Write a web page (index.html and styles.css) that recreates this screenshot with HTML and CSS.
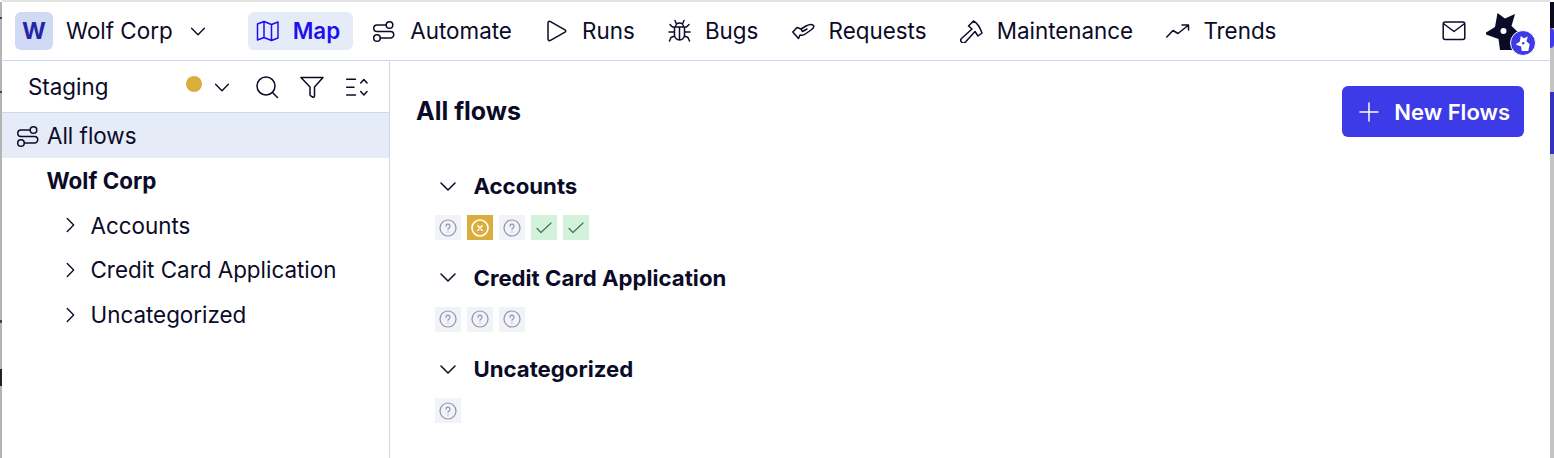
FILE: index.html
```html
<!DOCTYPE html>
<html lang="en">
<head>
    <meta charset="UTF-8" />
    <title>Wolf Corp | Map</title>
    <link rel="stylesheet" href="styles.css">
</head>
<body>
    <div class="edge-left"></div>

    <div class="app">
        <header class="topbar">
            <div class="org">
                <span class="org-badge">W</span>
                <span class="org-name">Wolf Corp</span>
                <svg class="icon chevron" viewBox="0 0 24 24"><path d="M5 9l7 7 7-7"/></svg>
            </div>

            <nav class="tabs">
                <a class="tab active" href="#">
                    <svg class="icon" viewBox="0 0 24 24"><path d="M1.500 5L8 2.500L15.500 5.500L22 3V19L15.500 21.500L8 18.500L1.500 21ZM8 2.500V18.500M15.500 5.500V21.500"/></svg>
                    Map
                </a>
                <a class="tab" href="#">
                    <svg class="icon" viewBox="0 0 24 24"><circle cx="16.500" cy="6" r="3.300"/><circle cx="4" cy="19" r="3.300"/><path d="M13.200 6H4a3.250 3.250 0 0 0 0 6.500H17.500a3.250 3.250 0 0 1 0 6.500H7.300"/></svg>
                    Automate
                </a>
                <a class="tab" href="#">
                    <svg class="icon" viewBox="0 0 24 24"><path d="M3 4C3 2.500 4.300 2 5.500 2.700L20 10.800C21 11.500 21 12.500 20 13.200L5.500 21.300C4.300 22 3 21.500 3 20Z"/></svg>
                    Runs
                </a>
                <a class="tab" href="#">
                    <svg class="icon" viewBox="0 0 24 24"><path d="M4.500 8H18.500M7.500 8a4 4 0 0 1 8 0M8.500 5L7 1.500M14.500 5L16 1.500M6.500 8V16a5 5 0 0 0 10 0V8M11.500 8V21M6.500 13H1M16.500 13H22M6.500 17L3 18.500L1.500 22M16.500 17L20 18.500L21.500 22M4.500 8L2 5.500M18.500 8L21 5.500"/></svg>
                    Bugs
                </a>
                <a class="tab" href="#">
                    <svg class="icon" viewBox="0 0 24 24"><path d="M0.800 13L5 8.500L9 10L14 7C17 5.500 20 5 21.500 6.500C22.500 8 21 9.500 19 11L14 14.500C12 16 10 16.500 8 16L6.500 19.500ZM9 10L10.500 12.500L15 10"/></svg>
                    Requests
                </a>
                <a class="tab" href="#">
                    <svg class="icon" viewBox="0 0 24 24"><path d="M8.500 7L13.500 2C17 4 20 8 22 14L18 17L15 12.500L5.500 23a2 2 0 0 1-4-3.500L12 10Z"/></svg>
                    Maintenance
                </a>
                <a class="tab" href="#">
                    <svg class="icon" viewBox="0 0 24 24"><path d="M0.800 18L7 11.500L12 14.500L22 6.500M16 6H22.500V11"/></svg>
                    Trends
                </a>
            </nav>

            <div class="user">
                <svg class="icon mail" viewBox="0 0 24 24"><rect x="1.200" y="3" width="21.600" height="17.500" rx="2"/><path d="M2 5l10 7.500L22 5"/></svg>
                <div class="avatar">
                    <svg class="wolf" viewBox="0 0 34 37"><path d="M11.500 0L19 5.500L29 1L25.500 13L33.500 20.500L30 37H14L12.500 26L0 21.500V19.500L9 14Z"/><circle cx="17.500" cy="18" r="3" fill="#fff"/></svg>
                    <span class="avatar-badge">
                        <svg viewBox="0 0 34 37"><path d="M11.500 0L19 5.500L29 1L25.500 13L33.500 20.500L30 37H14L12.500 26L0 21.500V19.500L9 14Z"/><circle cx="17.500" cy="18" r="3" fill="#3d3be8"/></svg>
                    </span>
                </div>
            </div>
        </header>

        <div class="body">
            <aside class="sidebar">
                <div class="sidebar-head">
                    <span class="env-name">Staging</span>
                    <span class="env-dot"></span>
                    <svg class="icon env-chevron" viewBox="0 0 24 24"><path d="M5 9l7 7 7-7"/></svg>
                    <svg class="icon tool" viewBox="0 0 24 24"><circle cx="11" cy="11" r="9"/><path d="M17.500 17.500L22.500 22.500"/></svg>
                    <svg class="icon tool" viewBox="0 0 24 24"><path d="M1 2.500h22l-8.500 9.500v9c0 1-1 1.500-1.800 1l-2-1.200c-.500-.300-.700-.800-.700-1.300V12Z"/></svg>
                    <svg class="icon tool" viewBox="0 0 24 24"><path d="M1.700 4.300H10.500M1.700 12.300H9M1.700 20H10.500M15.700 8l3.200-3.500L22 8M15.700 16.500l3.200 3.500 3.100-3.500"/></svg>
                </div>
                <ul class="tree">
                    <li class="tree-row selected">
                        <svg class="icon" viewBox="0 0 24 24"><circle cx="16.500" cy="6" r="3.300"/><circle cx="4" cy="19" r="3.300"/><path d="M13.200 6H4a3.250 3.250 0 0 0 0 6.500H17.500a3.250 3.250 0 0 1 0 6.500H7.300"/></svg>
                        All flows
                    </li>
                    <li class="tree-row tree-org">Wolf Corp</li>
                    <li class="tree-row tree-folder">
                        <svg class="icon caret" viewBox="0 0 24 24"><path d="M9 5l7 7-7 7"/></svg>
                        Accounts
                    </li>
                    <li class="tree-row tree-folder">
                        <svg class="icon caret" viewBox="0 0 24 24"><path d="M9 5l7 7-7 7"/></svg>
                        Credit Card Application
                    </li>
                    <li class="tree-row tree-folder">
                        <svg class="icon caret" viewBox="0 0 24 24"><path d="M9 5l7 7-7 7"/></svg>
                        Uncategorized
                    </li>
                </ul>
            </aside>

            <main class="content">
                <div class="content-head">
                    <h1>All flows</h1>
                    <button class="new-btn">
                        <svg class="icon" viewBox="0 0 24 24"><path d="M12 3v18M3 12h18"/></svg>
                        New Flows
                    </button>
                </div>

                <section class="group">
                    <h2>
                        <svg class="icon" viewBox="0 0 24 24"><path d="M5 9l7 7 7-7"/></svg>
                        Accounts
                    </h2>
                    <div class="chips">
                        <span class="chip unknown"><svg viewBox="0 0 18 18"><circle cx="9" cy="9" r="8"/><path d="M7 7.200a2 2 0 1 1 3 1.700c-.700.400-1 .800-1 1.400M9 12.800v.200"/></svg></span>
                        <span class="chip failed"><svg viewBox="0 0 18 18"><circle cx="9" cy="9" r="8"/><path d="M6.800 6.800l4.400 4.400M11.200 6.800l-4.400 4.400"/></svg></span>
                        <span class="chip unknown"><svg viewBox="0 0 18 18"><circle cx="9" cy="9" r="8"/><path d="M7 7.200a2 2 0 1 1 3 1.700c-.700.400-1 .800-1 1.400M9 12.800v.200"/></svg></span>
                        <span class="chip passed"><svg viewBox="0 0 18 18"><path d="M2 9.500l4 4L16 4"/></svg></span>
                        <span class="chip passed"><svg viewBox="0 0 18 18"><path d="M2 9.500l4 4L16 4"/></svg></span>
                    </div>
                </section>

                <section class="group">
                    <h2>
                        <svg class="icon" viewBox="0 0 24 24"><path d="M5 9l7 7 7-7"/></svg>
                        Credit Card Application
                    </h2>
                    <div class="chips">
                        <span class="chip unknown"><svg viewBox="0 0 18 18"><circle cx="9" cy="9" r="8"/><path d="M7 7.200a2 2 0 1 1 3 1.700c-.700.400-1 .800-1 1.400M9 12.800v.200"/></svg></span>
                        <span class="chip unknown"><svg viewBox="0 0 18 18"><circle cx="9" cy="9" r="8"/><path d="M7 7.200a2 2 0 1 1 3 1.700c-.700.400-1 .800-1 1.400M9 12.800v.200"/></svg></span>
                        <span class="chip unknown"><svg viewBox="0 0 18 18"><circle cx="9" cy="9" r="8"/><path d="M7 7.200a2 2 0 1 1 3 1.700c-.700.400-1 .800-1 1.400M9 12.800v.200"/></svg></span>
                    </div>
                </section>

                <section class="group">
                    <h2>
                        <svg class="icon" viewBox="0 0 24 24"><path d="M5 9l7 7 7-7"/></svg>
                        Uncategorized
                    </h2>
                    <div class="chips">
                        <span class="chip unknown"><svg viewBox="0 0 18 18"><circle cx="9" cy="9" r="8"/><path d="M7 7.200a2 2 0 1 1 3 1.700c-.700.400-1 .800-1 1.400M9 12.800v.200"/></svg></span>
                    </div>
                </section>
            </main>
        </div>
    </div>

    <div class="edge-right">
        <span class="edge-dark"></span>
        <span class="edge-dot"></span>
        <span class="edge-blue"></span>
    </div>
</body>
</html>
```

FILE: styles.css
```css
:root {
    --ink: #0b0b28;
    --line: #cdd8ef;
    --brand: #3d3be8;
    --pale: #e6ebf8;
}

* {
    margin: 0;
    padding: 0;
    box-sizing: border-box;
}

html, body {
    height: 100%;
    overflow: hidden;
}

body {
    display: flex;
    font-family: 'Inter', sans-serif;
    color: var(--ink);
    background: #fff;
}

/* Bits of the windows behind this one */
.edge-left {
    width: 2px;
    margin-top: 2px;
    background: linear-gradient(to bottom,
        #b4b4b4 15px, #444 15px 17px,
        #b4b4b4 17px 89px, #444 89px 91px,
        #b4b4b4 91px 318px, #444 318px 321px,
        #b4b4b4 321px 367px, #222 367px 384px,
        #b4b4b4 384px);
}

.edge-right {
    width: 4px;
    margin-top: 2px;
    display: flex;
    flex-direction: column;
    background: #c4c4c4;
}

.edge-dark {
    height: 26px;
    background: #0b0b20;
}

.edge-dot {
    height: 20px;
    border-radius: 0 10px 10px 0;
    background: var(--brand);
}

.edge-blue {
    height: 62px;
    margin-top: 44px;
    background: #3433c0;
}

.app {
    flex: 1;
    min-width: 0;
    display: flex;
    flex-direction: column;
    border-top: 2px solid #e2e2e2;
}

.icon {
    fill: none;
    stroke: currentColor;
    stroke-width: 1.5;
    stroke-linecap: round;
    stroke-linejoin: round;
    flex: none;
    width: 24px;
    height: 24px;
}

/* Top bar */
.topbar {
    height: 59px;
    display: flex;
    align-items: center;
    padding: 0 30px 0 13px;
    border-bottom: 1px solid var(--line);
}

.org {
    display: flex;
    align-items: center;
}

.org-badge {
    width: 38px;
    height: 38px;
    display: flex;
    align-items: center;
    justify-content: center;
    border-radius: 6px;
    background: #d1daf4;
    color: #2525a8;
    font-size: 23px;
    font-weight: 700;
}

.org-name {
    margin-left: 13px;
    padding-bottom: 2px;
    font-size: 22.4px;
}

.chevron {
    margin-left: 14px;
    width: 22px;
    height: 22px;
}

.tabs {
    display: flex;
    align-items: center;
    margin-left: 39px;
    gap: 12.2px;
}

.tab {
    height: 38px;
    display: flex;
    align-items: center;
    gap: 13px;
    padding: 0 13px 2px 8px;
    border-radius: 6px;
    color: var(--ink);
    text-decoration: none;
    font-size: 22.4px;
}

.tab .icon {
    margin-bottom: -2px;
}

.tab.active {
    background: var(--pale);
    color: #1c10f0;
    font-weight: 600;
}

.user {
    margin-left: auto;
    display: flex;
    align-items: center;
}

.avatar {
    position: relative;
    margin-left: 20px;
    margin-top: 1px;
    width: 34px;
    height: 37px;
}

.wolf {
    display: block;
    width: 34px;
    height: 37px;
    fill: var(--ink);
}

.avatar-badge {
    position: absolute;
    right: -16px;
    bottom: -6px;
    width: 26px;
    height: 26px;
    border-radius: 50%;
    border: 1.5px solid #fff;
    background: var(--brand);
    display: flex;
    align-items: center;
    justify-content: center;
}

.avatar-badge svg {
    width: 14px;
    height: 15px;
    fill: #fff;
}

/* Sidebar */
.body {
    flex: 1;
    display: flex;
    min-height: 0;
}

.sidebar {
    width: 388px;
    flex: none;
    border-right: 1px solid var(--line);
}

.sidebar-head {
    height: 52px;
    display: flex;
    align-items: center;
    padding: 0 20px 0 26px;
    border-bottom: 1px solid var(--line);
    font-size: 22.4px;
}

.env-name {
    flex: 1;
}

.env-dot {
    width: 16px;
    height: 16px;
    border-radius: 50%;
    background: #d9ae3d;
    margin-top: -5px;
}

.env-chevron {
    margin-left: 9px;
    width: 22px;
    height: 22px;
}

.tool {
    margin-left: 21px;
}

.env-chevron + .tool {
    margin-left: 22px;
}

.tree {
    list-style: none;
}

.tree-row {
    height: 44.75px;
    display: flex;
    align-items: center;
    gap: 6px;
    padding-left: 15px;
    font-size: 22.4px;
}

.tree-row.selected {
    height: 45px;
    background: var(--pale);
}

.tree-org {
    padding-left: 44.5px;
    font-weight: 700;
}

.tree-folder {
    padding-left: 57px;
    gap: 9.5px;
}

.caret {
    width: 22px;
    height: 22px;
}

/* Main content */
.content {
    flex: 1;
    min-width: 0;
    padding: 25px 26px 0 26px;
}

.content-head {
    display: flex;
    align-items: center;
    justify-content: space-between;
    margin-bottom: 34.5px;
}

h1 {
    padding-bottom: 2px;
    font-size: 25px;
    font-weight: 700;
}

.new-btn {
    height: 51px;
    display: flex;
    align-items: center;
    gap: 13px;
    padding: 0 14px 0 15px;
    border: 0;
    border-radius: 6px;
    background: var(--brand);
    color: #fff;
    font-family: inherit;
    font-size: 22px;
    font-weight: 600;
}

.group {
    margin-bottom: 23px;
    padding-left: 20px;
}

h2 {
    display: flex;
    align-items: center;
    gap: 13.5px;
    height: 28px;
    font-size: 22.2px;
    font-weight: 700;
}

.chips {
    display: flex;
    gap: 6px;
    margin-top: 15.5px;
    margin-left: -1px;
}

.chip {
    width: 26px;
    height: 25px;
    display: flex;
    align-items: center;
    justify-content: center;
}

.chip svg {
    width: 18px;
    height: 18px;
    fill: none;
    stroke-width: 1.2;
    stroke-linecap: round;
    stroke-linejoin: round;
}

.chip.unknown {
    background: #f1f3f8;
    stroke: #8d94a6;
}

.chip.failed {
    background: #d9ae3d;
    stroke: #fff;
}

.chip.failed svg {
    stroke-width: 1.6;
}

.chip.passed {
    background: #d3f2dc;
    stroke: #3d7a52;
}
```
